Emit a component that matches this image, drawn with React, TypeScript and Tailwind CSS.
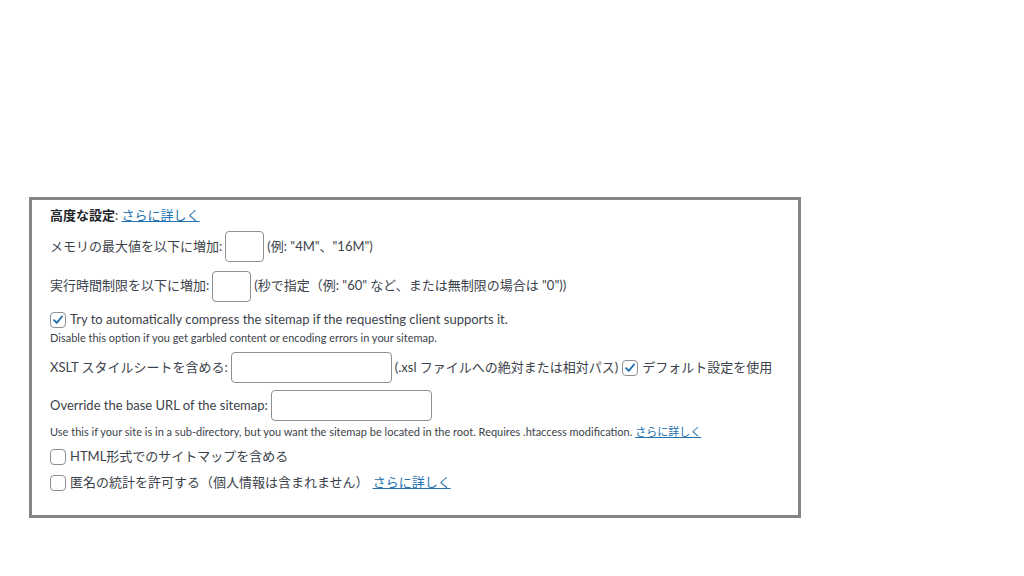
import React from 'react';

const font = { fontFamily: 'Lato, "Noto Sans CJK JP", sans-serif' };

function Box({ checked }: { checked?: boolean }) {
  return (
    <span className="w-4 h-4 shrink-0 rounded-[4px] border border-[#8c8f94] bg-white flex items-center justify-center">
      {checked && (
        <svg viewBox="0 0 16 16" className="w-[14px] h-[14px]">
          <path d="M3.5 8.2 L6.6 11.3 L12.6 4" fill="none" stroke="#2271b1" strokeWidth="2.2" strokeLinecap="round" strokeLinejoin="round" />
        </svg>
      )}
    </span>
  );
}

function Field({ w }: { w: string }) {
  return <span className={`${w} h-[31px] shrink-0 rounded-[4px] border border-[#8c8f94] bg-white mx-[3px]`} />;
}

export default function App() {
  return (
    <div className="w-[1024px] h-[576px] bg-white pt-[197px] pl-[29px] text-[13px] text-[#3c434a]" style={font}>
      <div className="w-[772px] h-[321px] border-[3px] border-[#858585] pl-[18px] pt-[7px]">
        {/* Heading */}
        <div className="h-[18px] flex items-center">
          <span className="font-bold text-[#1d2327]">高度な設定</span>
          <span>:&nbsp;</span>
          <a href="#" className="text-[#2271b1] underline">さらに詳しく</a>
        </div>

        {/* Memory */}
        <div className="mt-[6px] h-[31px] flex items-center">
          <span>メモリの最大値を以下に増加:</span>
          <Field w="w-[39px]" />
          <span>(例: "4M"、"16M")</span>
        </div>

        {/* Time limit */}
        <div className="mt-[8px] h-[32px] flex items-center">
          <span>実行時間制限を以下に増加:</span>
          <Field w="w-[39px]" />
          <span>(秒で指定（例: "60" など、または無制限の場合は "0"))</span>
        </div>

        {/* Compress */}
        <div className="mt-[9px] h-[18px] flex items-center gap-[4px]">
          <Box checked />
          <span>Try to automatically compress the sitemap if the requesting client supports it.</span>
        </div>
        <div className="mt-[2px] h-[14px] flex items-center text-[11px]">
          Disable this option if you get garbled content or encoding errors in your sitemap.
        </div>

        {/* XSLT */}
        <div className="mt-[7px] h-[31px] flex items-center">
          <span>XSLT スタイルシートを含める:</span>
          <Field w="w-[161px]" />
          <span className="mr-[4px]">(.xsl ファイルへの絶対または相対パス)</span>
          <Box checked />
          <span className="ml-[4px]">デフォルト設定を使用</span>
        </div>

        {/* Base URL */}
        <div className="mt-[7px] h-[31px] flex items-center">
          <span>Override the base URL of the sitemap:</span>
          <Field w="w-[161px]" />
        </div>
        <div className="mt-[4px] h-[14px] flex items-center text-[11px]">
          <span>Use this if your site is in a sub-directory, but you want the sitemap be located in the root. Requires .htaccess modification.&nbsp;</span>
          <a href="#" className="text-[#2271b1] underline">さらに詳しく</a>
        </div>

        {/* HTML */}
        <div className="mt-[9px] h-[18px] flex items-center gap-[4px]">
          <Box />
          <span>HTML形式でのサイトマップを含める</span>
        </div>

        {/* Anonymous */}
        <div className="mt-[8px] h-[18px] flex items-center gap-[4px]">
          <Box />
          <span>匿名の統計を許可する（個人情報は含まれません）</span>
          <a href="#" className="text-[#2271b1] underline">さらに詳しく</a>
        </div>
      </div>
    </div>
  );
}
